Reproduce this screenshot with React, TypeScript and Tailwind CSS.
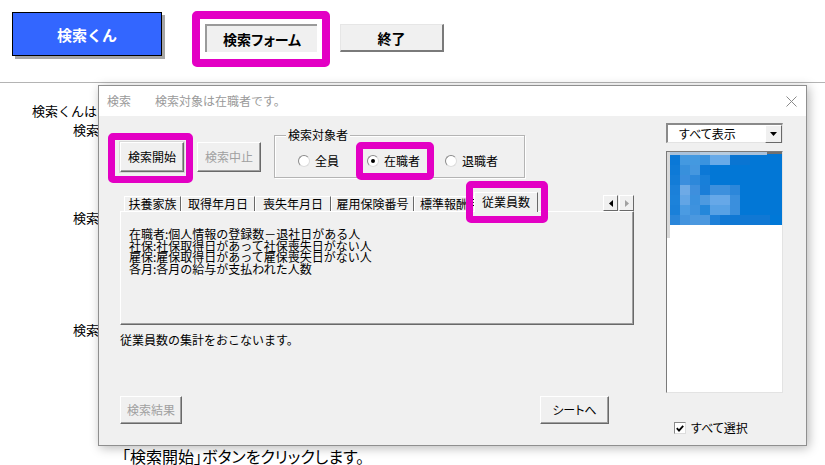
import React from "react";

function Btn({
  children,
  className = "",
  disabled = false,
}: {
  children: React.ReactNode;
  className?: string;
  disabled?: boolean;
}) {
  return (
    <div
      className={
        "flex items-center justify-center bg-[#f0f0f0] border border-t-white border-l-white border-r-[#696969] border-b-[#696969] shadow-[inset_-1px_-1px_0_#a0a0a0] text-[12px] leading-none " +
        (disabled ? "text-[#a0a0a0] " : "text-black ") +
        className
      }
    >
      {children}
    </div>
  );
}

function Radio({ checked = false }: { checked?: boolean }) {
  return (
    <span className="w-[12px] h-[12px] rounded-full bg-white border border-t-[#8a8a8a] border-l-[#8a8a8a] border-r-[#dcdcdc] border-b-[#dcdcdc] flex items-center justify-center shrink-0">
      {checked && <span className="w-[4px] h-[4px] rounded-full bg-black" />}
    </span>
  );
}

const mosaic: string[][] = [
  ["#0a78d7", "#4499e0", "#4499e0", "#3a93df", "#68aae8", "#68aae8", "#0a75d2", "#0a75d2", "#0277d6", "#0277d6", "#0277d6"],
  ["#0e7ad7", "#3890dc", "#4597df", "#0c78d6", "#0277d6", "#0277d6", "#0277d6", "#0277d6", "#0277d6", "#0277d6", "#0277d6"],
  ["#137cd7", "#3b8edd", "#2d88da", "#187fd9", "#0277d6", "#0277d6", "#0277d6", "#0277d6", "#0277d6", "#0277d6", "#0277d6"],
  ["#1b80d9", "#6eaae6", "#3e8fdd", "#1a7ed8", "#3d90dd", "#3d90dd", "#2c87da", "#0277d6", "#0277d6", "#0277d6", "#0277d6"],
  ["#1c82da", "#62a5e5", "#3b91de", "#4d9ae0", "#66a8e8", "#66a8e8", "#3a8fdd", "#0277d6", "#0277d6", "#0277d6", "#0277d6"],
  ["#1a80d9", "#4b9be2", "#3e92de", "#2487da", "#57a1e5", "#57a1e5", "#3a8fdd", "#0277d6", "#0277d6", "#0277d6", "#0277d6"],
  ["#2a86da", "#4494de", "#4b98df", "#4b98df", "#1e80d8", "#1078d4", "#1078d4", "#1078d4", "#1078d4", "#1078d4", "#0078d7"],
];

function Mosaic() {
  return (
    <svg width="115" height="86" viewBox="0 0 115 86" className="block">
      <rect x="0" y="0" width="3" height="86" fill="#d9d9d9" />
      <rect x="3" y="0" width="97" height="3" fill="#a9c1da" />
      <rect x="33" y="0" width="30" height="3" fill="#b8ccdf" />
      <rect x="100" y="0" width="15" height="2" fill="#707070" />
      <rect x="100" y="2" width="15" height="1" fill="#0277d6" />
      {mosaic.map((row, r) =>
        row.map((c, i) => (
          <rect
            key={r + "-" + i}
            x={3 + i * 10}
            y={3 + r * 10}
            width={i === 10 ? 12 : 10}
            height={10}
            fill={c}
          />
        ))
      )}
    </svg>
  );
}

export default function App() {
  return (
    <div className="relative w-[825px] h-[465px] overflow-hidden bg-white text-black font-['Noto_Sans_CJK_JP','Noto_Sans',sans-serif]">
      {/* top bar */}
      <div className="h-[83px] border-b border-[#b4b4b4] flex items-start">
        <div className="ml-[12px] mt-[12px] w-[150px] h-[44px] bg-[#3366ff] border-[1.5px] border-black shadow-[3px_3px_0_#a6a6a6] flex items-center justify-center text-white text-[15px] font-bold leading-none">
          検索くん
        </div>
        <div className="ml-[30px] mt-[11px] w-[138px] h-[56px] border-[8px] border-[#e300c4] rounded-[5px] flex justify-center pt-[5px]">
          <div className="w-[112px] h-[28px] bg-[#f0f0f0] border-t-2 border-l-2 border-[#9a9a9a] flex items-center justify-center text-[14px] font-bold leading-none [font-feature-settings:'palt']">
            検索フォーム
          </div>
        </div>
        <div className="ml-[10px] mt-[24px] w-[104px] h-[28px] bg-[#f0f0f0] border-t border-l border-[#e6e6e6] border-r-2 border-b-2 border-r-[#7a7a7a] border-b-[#7a7a7a] flex items-center justify-center text-[14px] font-bold leading-none">
          終了
        </div>
      </div>

      {/* background text */}
      <div className="flex flex-col text-[13px] leading-[16px]">
        <div className="ml-[32px] mt-[20px]">検索くんは</div>
        <div className="ml-[73px] mt-[3px]">検索</div>
        <div className="ml-[73px] mt-[72px]">検索</div>
        <div className="ml-[73px] mt-[96px]">検索</div>
        <div className="ml-[122px] mt-[109px] text-[16px] leading-[18px] [font-feature-settings:'palt']">
          「検索開始」ボタンをクリックします。
        </div>
      </div>

      {/* dialog window */}
      <div className="absolute left-[98px] top-[85px] w-[709px] h-[361px] border border-[#8f8f8f] bg-[#f0f0f0] shadow-[2px_2px_10px_rgba(0,0,0,0.28)] flex flex-col">
        <div className="h-[30px] bg-white flex items-center text-[12px] text-[#9a9a9a] pl-[8px] leading-none">
          <span>検索</span>
          <span className="ml-[24px]">検索対象は在職者です。</span>
          <svg width="11" height="11" viewBox="0 0 11 11" className="ml-auto mr-[9px]">
            <path d="M0.5 0.5 L10.5 10.5 M10.5 0.5 L0.5 10.5" stroke="#8a8a8a" strokeWidth="1" />
          </svg>
        </div>

        <div className="flex-1 flex">
          {/* left column */}
          <div className="w-[536px] pl-[9px] flex flex-col">
            {/* row 1 */}
            <div className="mt-[17px] h-[50px] flex items-start">
              <div className="w-[85px] h-[50px] border-[7px] border-[#e300c4] rounded-[5px] pl-[5px] pt-[2px]">
                <Btn className="w-[64px] h-[30px] outline outline-1 outline-[#d8d8d8]">検索開始</Btn>
              </div>
              <Btn disabled className="ml-[4px] mt-[9px] w-[64px] h-[30px]">
                検索中止
              </Btn>
              <div className="relative ml-[13px] mt-[2px] w-[251px] h-[43px] border border-[#b4b4b4] shadow-[inset_1px_1px_0_#fff,1px_1px_0_#fff]">
                <div className="absolute left-[11px] -top-[9px] px-[2px] bg-[#f0f0f0] text-[12px] leading-[16px]">
                  検索対象者
                </div>
                <div className="mt-[18px] h-[14px] flex items-center text-[12px] leading-none">
                  <div className="ml-[23px] flex items-center gap-[5px]">
                    <Radio />
                    <span>全員</span>
                  </div>
                  <div className="ml-[28px] flex items-center gap-[5px]">
                    <Radio checked />
                    <span>在職者</span>
                  </div>
                  <div className="ml-[25px] flex items-center gap-[5px]">
                    <Radio />
                    <span>退職者</span>
                  </div>
                </div>
                <div className="absolute left-[81px] top-[6px] w-[78px] h-[38px] border-[7px] border-[#e300c4] rounded-[5px]" />
              </div>
            </div>

            {/* tabs + panel */}
            <div className="ml-[12px] w-[514px] flex flex-col">
              <div className="relative mt-[9px] h-[19px] flex items-end text-[12px] leading-none">
                <div className="ml-[4px] w-[57px] h-[15px] border-t border-l border-white border-r border-r-[#696969] flex items-center justify-center">扶養家族</div>
                <div className="w-[74px] h-[15px] border-t border-l border-white border-r border-r-[#696969] flex items-center justify-center">取得年月日</div>
                <div className="w-[76px] h-[15px] border-t border-l border-white border-r border-r-[#696969] flex items-center justify-center">喪失年月日</div>
                <div className="w-[83px] h-[15px] border-t border-l border-white border-r border-r-[#696969] flex items-center justify-center">雇用保険番号</div>
                <div className="w-[60px] h-[15px] border-t border-l border-white overflow-hidden flex items-center pl-[5px] whitespace-nowrap">標準報酬月額</div>
                <div className="relative z-10 -mb-px w-[64px] h-[20px] bg-[#f0f0f0] border-t border-l border-white border-r border-r-[#696969] flex items-center justify-center pb-[2px]">従業員数</div>
                <div className="flex-1" />
                <div className="flex gap-[1px] mb-0">
                  <div className="w-[15px] h-[16px] bg-[#f0f0f0] border border-t-white border-l-white border-r-[#696969] border-b-[#696969] flex items-center justify-center">
                    <svg width="4" height="7" viewBox="0 0 4 7">
                      <polygon points="4,0 4,7 0,3.5" fill="#000" />
                    </svg>
                  </div>
                  <div className="w-[15px] h-[16px] bg-[#f0f0f0] border border-t-white border-l-white border-r-[#696969] border-b-[#696969] flex items-center justify-center">
                    <svg width="4" height="7" viewBox="0 0 4 7">
                      <polygon points="0,0 0,7 4,3.5" fill="#a0a0a0" />
                    </svg>
                  </div>
                </div>
                <div className="absolute left-[346px] -top-[11px] w-[82px] h-[42px] border-[7px] border-[#e300c4] rounded-[5px] z-20" />
              </div>
              <div className="h-[114px] border-t border-l border-white border-r border-b border-r-[#696969] border-b-[#696969] shadow-[inset_-1px_-1px_0_#a0a0a0] pl-[8px] pt-[16px] text-[12px] leading-[11.6px]">
                <div>在職者:個人情報の登録数－退社日がある人</div>
                <div>社保:社保取得日があって社保喪失日がない人</div>
                <div>雇保:雇保取得日があって雇保喪失日がない人</div>
                <div>各月:各月の給与が支払われた人数</div>
              </div>
              <div className="mt-[8px] text-[12px] leading-[14px]">従業員数の集計をおこないます。</div>
              <div className="mt-[49px] flex">
                <Btn disabled className="w-[62px] h-[28px]">検索結果</Btn>
                <Btn className="ml-[358px] w-[69px] h-[28px] [font-feature-settings:'palt']">シートへ</Btn>
              </div>
            </div>
          </div>

          {/* right column */}
          <div className="ml-[31px] w-[117px] flex flex-col">
            <div className="mt-[7px] h-[20px] bg-white border-t-2 border-l-2 border-t-[#8a8a8a] border-l-[#8a8a8a] border-b border-r border-b-[#e3e3e3] border-r-[#e3e3e3] flex items-center">
              <span className="pl-[11px] text-[12px] leading-none [font-feature-settings:'palt']">すべて表示</span>
              <div className="ml-auto w-[17px] h-[18px] bg-[#f0f0f0] border border-t-white border-l-white border-r-[#696969] border-b-[#696969] flex items-center justify-center">
                <svg width="7" height="4" viewBox="0 0 7 4">
                  <polygon points="0,0 7,0 3.5,4" fill="#000" />
                </svg>
              </div>
            </div>
            <div className="mt-[8px] h-[242px] bg-white border-t border-l border-t-[#7a7a7a] border-l-[#7a7a7a] border-b border-r border-b-[#e3e3e3] border-r-[#e3e3e3]">
              <Mosaic />
            </div>
            <div className="mt-[29px] ml-[8px] flex items-center gap-[5px] text-[12px] leading-none">
              <span className="w-[12px] h-[12px] bg-white border border-t-[#8a8a8a] border-l-[#8a8a8a] border-r-[#dcdcdc] border-b-[#dcdcdc] flex items-center justify-center">
                <svg width="8" height="7" viewBox="0 0 8 7">
                  <path d="M0.8 3.2 L3 5.6 L7.2 0.8" stroke="#000" strokeWidth="1.8" fill="none" />
                </svg>
              </span>
              <span className="[font-feature-settings:'palt']">すべて選択</span>
            </div>
          </div>
        </div>
      </div>
    </div>
  );
}
